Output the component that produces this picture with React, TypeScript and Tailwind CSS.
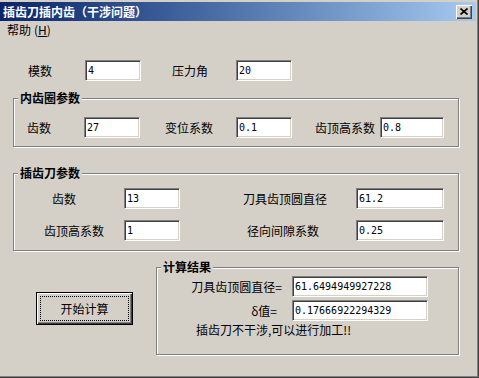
const field =
  "h-[21px] bg-white border border-t-[#808080] border-l-[#808080] border-r-white border-b-white shadow-[inset_1px_1px_0_#404040,inset_-1px_-1px_0_#d4d0c8] flex items-center pl-[2px] font-['DejaVu_Sans_Mono',monospace] text-[10px] leading-none text-black";

const group =
  "relative bg-[#d4d0c8] border border-[#808080] shadow-[inset_1px_1px_0_#ffffff,1px_1px_0_#ffffff]";

const legend =
  "absolute left-[4px] top-[-8px] px-[2px] bg-[#d4d0c8] font-bold leading-[14px]";

function Field({ value, className }: { value: string; className: string }) {
  return <div className={`${field} ${className}`}>{value}</div>;
}

export default function App() {
  return (
    <div className="w-[479px] h-[378px] bg-[#d4d0c8] border-r border-b border-[#404040] font-['Noto_Sans_CJK_SC',sans-serif] text-[12px] text-black">
      <div className="h-full border-r border-b border-[#808080] pt-[2px] flex flex-col">
        {/* title bar */}
        <div className="mr-[1px] h-[19px] bg-linear-to-r from-[#0a246a] to-[#a6caf0] flex items-center justify-between pl-[3px] pr-[4px]">
          <span className="font-bold text-white leading-none">插齿刀插内齿（干涉问题）</span>
          <div className="w-[16px] h-[14px] bg-[#d4d0c8] shadow-[inset_1px_1px_0_#ffffff,inset_-1px_-1px_0_#404040,inset_-2px_-2px_0_#808080] flex items-center justify-center">
            <svg width="8" height="7" viewBox="0 0 8 7">
              <path d="M0.5 0.5 L7.5 6.5 M7.5 0.5 L0.5 6.5" stroke="#000" strokeWidth="1.6" />
            </svg>
          </div>
        </div>

        {/* menu */}
        <div className="h-[18px] pl-[7px] flex items-center leading-none">
          <span>帮助</span>
          <span className="ml-[3px]">
            (<span className="underline">H</span>)
          </span>
        </div>

        {/* row 1 */}
        <div className="mt-[21px] h-[21px] pl-[28px] flex items-center">
          <span className="w-[57px]">模数</span>
          <Field value="4" className="w-[56px]" />
          <span className="ml-[31px] w-[64px]">压力角</span>
          <Field value="20" className="w-[56px]" />
        </div>

        {/* 内齿圈参数 */}
        <div className={`${group} mt-[17px] ml-[13px] w-[446px] h-[49px]`}>
          <span className={legend}>内齿圈参数</span>
          <div className="mt-[18px] ml-[13px] flex items-center">
            <span className="w-[57px]">齿数</span>
            <Field value="27" className="w-[56px]" />
            <span className="ml-[25px] w-[71px]">变位系数</span>
            <Field value="0.1" className="w-[56px]" />
            <span className="ml-[23px] w-[65px]">齿顶高系数</span>
            <Field value="0.8" className="w-[64px]" />
          </div>
        </div>

        {/* 插齿刀参数 */}
        <div className={`${group} mt-[26px] ml-[13px] w-[446px] h-[78px]`}>
          <span className={legend}>插齿刀参数</span>
          <div className="mt-[14px] flex items-center">
            <span className="ml-[38px] w-[72px]">齿数</span>
            <Field value="13" className="w-[56px]" />
            <span className="ml-[63px] w-[113px]">刀具齿顶圆直径</span>
            <Field value="61.2" className="w-[88px]" />
          </div>
          <div className="mt-[11px] flex items-center">
            <span className="ml-[30px] w-[80px]">齿顶高系数</span>
            <Field value="1" className="w-[56px]" />
            <span className="ml-[67px] w-[109px]">径向间隙系数</span>
            <Field value="0.25" className="w-[88px]" />
          </div>
        </div>

        {/* button + results */}
        <div className="mt-[16px] flex items-start">
          <button className="relative ml-[36px] mt-[25px] w-[97px] h-[33px] bg-[#d4d0c8] border border-black shadow-[inset_1px_1px_0_#ffffff,inset_-1px_-1px_0_#404040,inset_-2px_-2px_0_#808080] flex items-center justify-center leading-none">
            <span className="absolute inset-[3px] border border-dotted border-black" />
            <span className="relative">开始计算</span>
          </button>

          <div className={`${group} ml-[23px] w-[303px] h-[88px]`}>
            <span className={legend}>计算结果</span>
            <div className="mt-[8px] flex items-center">
              <span className="w-[135px] pr-[10px] text-right">刀具齿顶圆直径=</span>
              <Field value="61.6494949927228" className="w-[136px]" />
            </div>
            <div className="mt-[3px] flex items-center">
              <span className="w-[135px] pr-[15px] text-right">δ值=</span>
              <Field value="0.17666922294329" className="w-[136px]" />
            </div>
            <div className="mt-[2px] ml-[39px] leading-[14px]">插齿刀不干涉,可以进行加工!!</div>
          </div>
        </div>
      </div>
    </div>
  );
}
